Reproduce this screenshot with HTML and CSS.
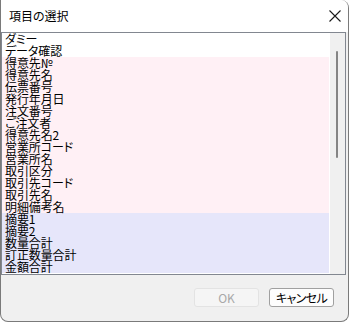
FILE: index.html
```html
<!DOCTYPE html>
<html lang="ja">
<head>
<meta charset="utf-8">
<link rel="stylesheet" href="styles.css">
</head>
<body>
<div class="window">
  <div class="titlebar">
    <span class="title">項目の選択</span>
    <svg class="close" width="12" height="12" viewBox="0 0 12 12"><path d="M0.5 0.5 L11.5 11.5 M11.5 0.5 L0.5 11.5" stroke="#1a1a1a" stroke-width="1.1" fill="none"/></svg>
  </div>
  <div class="list">
    <div class="items">
      <div class="row">ダミー</div>
      <div class="row">データ確認</div>
      <div class="row pink">得意先№</div>
      <div class="row pink">得意先名</div>
      <div class="row pink">伝票番号</div>
      <div class="row pink">発行年月日</div>
      <div class="row pink">注文番号</div>
      <div class="row pink">ご注文者</div>
      <div class="row pink">得意先名2</div>
      <div class="row pink">営業所コード</div>
      <div class="row pink">営業所名</div>
      <div class="row pink">取引区分</div>
      <div class="row pink">取引先コード</div>
      <div class="row pink">取引先名</div>
      <div class="row pink">明細備考名</div>
      <div class="row blue">摘要1</div>
      <div class="row blue">摘要2</div>
      <div class="row blue">数量合計</div>
      <div class="row blue">訂正数量合計</div>
      <div class="row blue">金額合計</div>
    </div>
    <div class="scrollbar"><div class="thumb"></div></div>
  </div>
  <div class="buttons">
    <button class="btn disabled">OK</button>
    <button class="btn">キャンセル</button>
  </div>
</div>
</body>
</html>
```
FILE: styles.css
```css
html, body {
  margin: 0;
  padding: 0;
  background: #ffffff;
}
body {
  font-family: "Noto Sans CJK JP", "Noto Sans", sans-serif;
  font-size: 12px;
  color: #000;
}
.window {
  box-sizing: border-box;
  width: 349px;
  height: 322px;
  background: #f0f0f0;
  border: 1px solid #7a7a7a;
  border-top: none;
  border-radius: 0 8px 8px 8px;
  overflow: hidden;
  display: flex;
  flex-direction: column;
}
.titlebar {
  height: 32px;
  flex: none;
  background: #ffffff;
  display: flex;
  align-items: center;
  padding-left: 8px;
  padding-right: 7px;
}
.title {
  flex: 1;
  font-size: 12px;
  font-feature-settings: "palt";
  line-height: 14px;
  margin-top: 0px;
}
.close {
  display: block;
  margin-top: 0px;
}
.list {
  flex: none;
  height: 243px;
  width: 345px;
  box-sizing: border-box;
  border: 1px solid #828790;
  background: #ffffff;
  display: flex;
}
.items {
  width: 327px;
  flex: none;
  overflow: hidden;
}
.row {
  height: 12px;
  line-height: 12px;
  padding-left: 3px;
  white-space: nowrap;
  font-feature-settings: "palt";
  letter-spacing: -0.1px;
}
.pink { background: #fff0f5; }
.blue { background: #e6e6fa; }
.scrollbar {
  flex: 1;
  background: #f0f0f0;
  border-left: 1px solid #ffffff;
  box-sizing: border-box;
  padding-top: 18px;
  padding-left: 6px;
}
.thumb {
  width: 2px;
  height: 107px;
  background: #858585;
  border-radius: 1px;
}
.buttons {
  display: flex;
  justify-content: flex-end;
  gap: 10px;
  padding-top: 13px;
  padding-right: 14px;
}
.btn {
  box-sizing: border-box;
  width: 65px;
  height: 19px;
  padding: 0;
  font-family: "Noto Sans CJK JP", "Noto Sans", sans-serif;
  font-size: 12px;
  line-height: 16px;
  font-feature-settings: "palt";
  letter-spacing: -0.6px;
  background: #fdfdfd;
  border: 1px solid #a0a0a0;
  border-radius: 3px;
  color: #000;
}
.btn.disabled {
  background: #f5f5f5;
  border-color: #e3e3e3;
  color: #a8a8a8;
  letter-spacing: 0;
}
```
